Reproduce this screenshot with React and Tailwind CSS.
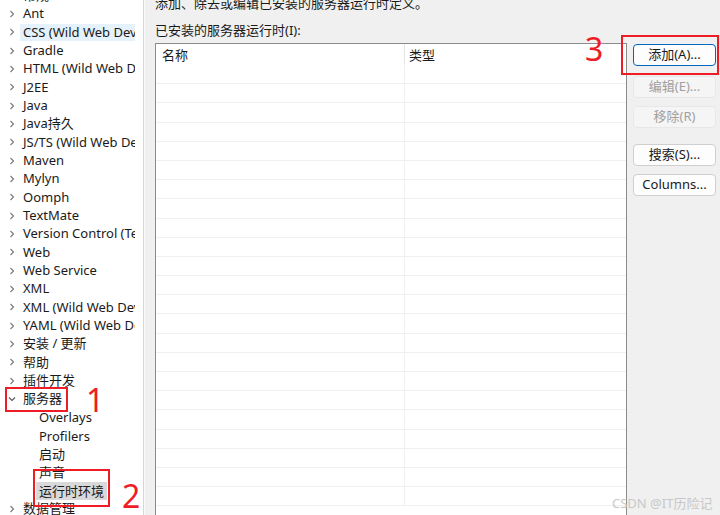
import React from 'react';

const font = { fontFamily: '"Noto Sans", "Noto Sans CJK SC", sans-serif' };

const treeItems = [
    { label: '常规' },
    { label: 'Ant' },
    { label: 'CSS (Wild Web Developer)', selected: true },
    { label: 'Gradle' },
    { label: 'HTML (Wild Web Developer)' },
    { label: 'J2EE' },
    { label: 'Java' },
    { label: 'Java持久' },
    { label: 'JS/TS (Wild Web Developer)' },
    { label: 'Maven' },
    { label: 'Mylyn' },
    { label: 'Oomph' },
    { label: 'TextMate' },
    { label: 'Version Control (Team)' },
    { label: 'Web' },
    { label: 'Web Service' },
    { label: 'XML' },
    { label: 'XML (Wild Web Developer)' },
    { label: 'YAML (Wild Web Developer)' },
    { label: '安装 / 更新' },
    { label: '帮助' },
    { label: '插件开发' },
    { label: '服务器', open: true },
    { label: 'Overlays', child: true },
    { label: 'Profilers', child: true },
    { label: '启动', child: true },
    { label: '声音', child: true },
    { label: '运行时环境', child: true, current: true },
    { label: '数据管理' },
];

const Chevron = ({ open }) => (
    <svg width="8" height="8" viewBox="0 0 8 8" className="shrink-0">
        {open ? (
            <path d="M1 2.5 L4 5.5 L7 2.5" fill="none" stroke="#555" strokeWidth="1.1" />
        ) : (
            <path d="M2.5 1 L5.5 4 L2.5 7" fill="none" stroke="#777" strokeWidth="1.1" />
        )}
    </svg>
);

const TreeRow = ({ item }) => {
    if (item.child) {
        return (
            <div className="h-[18.33px] flex items-center pl-[36px]">
                <span className={`px-[3px] leading-[18px] whitespace-nowrap ${item.current ? 'bg-[#d9d9d9]' : ''}`}>
                    {item.label}
                </span>
            </div>
        );
    }
    return (
        <div className="h-[18.33px] flex items-center pl-[8px]">
            <Chevron open={item.open} />
            <span
                className={`ml-[4px] pl-[3px] leading-[17px] whitespace-nowrap flex-1 overflow-hidden ${item.selected ? 'bg-[#e5f1fb]' : ''}`}
            >
                {item.label}
            </span>
        </div>
    );
};

const Button = ({ children, primary, disabled, className = '' }) => (
    <div
        className={`w-[83px] h-[22px] rounded-[4px] border flex items-center justify-center text-[13px] ${
            primary
                ? 'border-[#0067c0] bg-[#fdfdfd] text-[#1a1a1a]'
                : disabled
                ? 'border-[#e8e8e8] bg-[#f5f5f5] text-[#a0a0a0]'
                : 'border-[#cfcfcf] bg-[#fdfdfd] text-[#1a1a1a]'
        } ${className}`}
    >
        {children}
    </div>
);

export default function App() {
    return (
        <div className="relative w-[720px] h-[515px] overflow-hidden bg-[#f0f0f0] text-[13px] text-[#1a1a1a] flex" style={font}>
            {/* 左侧首选项树 */}
            <div className="w-[144px] h-full bg-white border-r border-[#d6d6d6] overflow-hidden shrink-0">
                <div className="mt-[-13.5px] pr-[8px]">
                    {treeItems.map((item, i) => (
                        <TreeRow key={i} item={item} />
                    ))}
                </div>
            </div>

            {/* 右侧服务器运行时环境 */}
            <div className="flex-1 pl-[10px] border-l border-[#fafafa]">
                <div className="mt-[-6px] leading-[18px] whitespace-nowrap">添加、除去或编辑已安装的服务器运行时定义。</div>
                <div className="mt-[9px] leading-[18px]">已安装的服务器运行时(I):</div>
                <div className="flex mt-[4px] gap-[6px]">
                    <div className="w-[472px] h-[480px] bg-white border border-[#8c8c8c] border-b-0 overflow-hidden">
                        <div className="flex h-[21px]">
                            <div className="w-[249px] border-r border-[#e5e5e5] pl-[6px] leading-[23px]">名称</div>
                            <div className="flex-1 pl-[4px] leading-[23px]">类型</div>
                        </div>
                        {Array.from({ length: 23 }).map((_, i) => (
                            <div key={i} className="flex h-[19.2px] border-b border-[#f0f0f0]">
                                <div className="w-[249px] border-r border-[#eef2f6]"></div>
                                <div className="flex-1"></div>
                            </div>
                        ))}
                    </div>
                    <div className="flex flex-col pt-[1px]">
                        <Button primary>添加(A)...</Button>
                        <Button disabled className="mt-[10px]">编辑(E)...</Button>
                        <Button disabled className="mt-[8px]">移除(R)</Button>
                        <Button className="mt-[16px]">搜索(S)...</Button>
                        <Button className="mt-[8px]">Columns...</Button>
                    </div>
                </div>
            </div>

            {/* 标注 */}
            <div className="absolute left-[621px] top-[35px] w-[98px] h-[40px] border-2 border-[#ee1c24]"></div>
            <div className="absolute left-[585px] top-[29px] text-[32px] leading-[40px] text-[#ee1c24]">3</div>
            <div className="absolute left-[5px] top-[387px] w-[63px] h-[25px] border-2 border-[#ee1c24]"></div>
            <div className="absolute left-[86px] top-[380px] text-[32px] leading-[40px] text-[#ee1c24]">1</div>
            <div className="absolute left-[33px] top-[469px] w-[77px] h-[38px] border-2 border-[#ee1c24]"></div>
            <div className="absolute left-[122px] top-[476px] text-[32px] leading-[40px] text-[#ee1c24]">2</div>

            <div className="absolute left-[612px] top-[494px] text-[13px] leading-[18px] text-[#c8c8c8]">CSDN @IT历险记</div>
        </div>
    );
}
